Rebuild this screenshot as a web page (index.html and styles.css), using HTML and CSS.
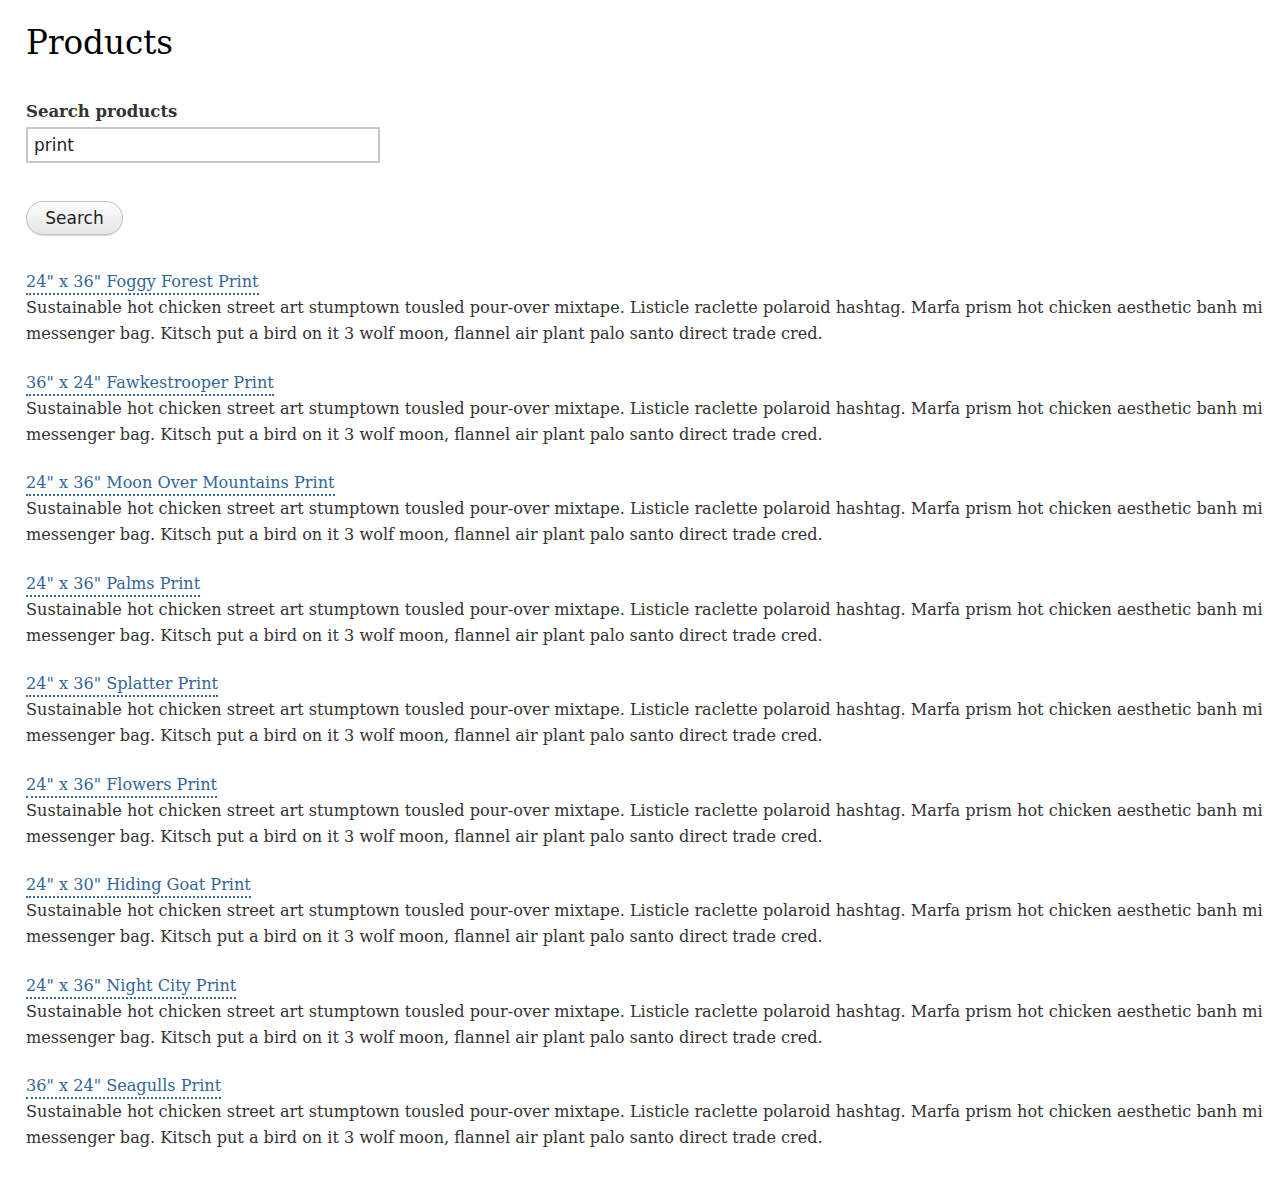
FILE: index.html
```html
<!DOCTYPE html>
<html>
<head>
<meta charset="utf-8">
<title>Products</title>
<link rel="stylesheet" href="styles.css">
</head>
<body>
<main class="page">
  <h1 class="title">Products</h1>
  <form class="search">
    <label class="search-label" for="q">Search products</label>
    <input class="search-input" id="q" type="text" value="print">
    <button class="search-button" type="button">Search</button>
  </form>
  <ul class="results">
    <li class="item"><a class="item-link" href="#">24" x 36" Foggy Forest Print</a><p class="item-desc">Sustainable hot chicken street art stumptown tousled pour-over mixtape. Listicle raclette polaroid hashtag. Marfa prism hot chicken aesthetic banh mi messenger bag. Kitsch put a bird on it 3 wolf moon, flannel air plant palo santo direct trade cred.</p></li>
    <li class="item"><a class="item-link" href="#">36" x 24" Fawkestrooper Print</a><p class="item-desc">Sustainable hot chicken street art stumptown tousled pour-over mixtape. Listicle raclette polaroid hashtag. Marfa prism hot chicken aesthetic banh mi messenger bag. Kitsch put a bird on it 3 wolf moon, flannel air plant palo santo direct trade cred.</p></li>
    <li class="item"><a class="item-link" href="#">24" x 36" Moon Over Mountains Print</a><p class="item-desc">Sustainable hot chicken street art stumptown tousled pour-over mixtape. Listicle raclette polaroid hashtag. Marfa prism hot chicken aesthetic banh mi messenger bag. Kitsch put a bird on it 3 wolf moon, flannel air plant palo santo direct trade cred.</p></li>
    <li class="item"><a class="item-link" href="#">24" x 36" Palms Print</a><p class="item-desc">Sustainable hot chicken street art stumptown tousled pour-over mixtape. Listicle raclette polaroid hashtag. Marfa prism hot chicken aesthetic banh mi messenger bag. Kitsch put a bird on it 3 wolf moon, flannel air plant palo santo direct trade cred.</p></li>
    <li class="item"><a class="item-link" href="#">24" x 36" Splatter Print</a><p class="item-desc">Sustainable hot chicken street art stumptown tousled pour-over mixtape. Listicle raclette polaroid hashtag. Marfa prism hot chicken aesthetic banh mi messenger bag. Kitsch put a bird on it 3 wolf moon, flannel air plant palo santo direct trade cred.</p></li>
    <li class="item"><a class="item-link" href="#">24" x 36" Flowers Print</a><p class="item-desc">Sustainable hot chicken street art stumptown tousled pour-over mixtape. Listicle raclette polaroid hashtag. Marfa prism hot chicken aesthetic banh mi messenger bag. Kitsch put a bird on it 3 wolf moon, flannel air plant palo santo direct trade cred.</p></li>
    <li class="item"><a class="item-link" href="#">24" x 30" Hiding Goat Print</a><p class="item-desc">Sustainable hot chicken street art stumptown tousled pour-over mixtape. Listicle raclette polaroid hashtag. Marfa prism hot chicken aesthetic banh mi messenger bag. Kitsch put a bird on it 3 wolf moon, flannel air plant palo santo direct trade cred.</p></li>
    <li class="item"><a class="item-link" href="#">24" x 36" Night City Print</a><p class="item-desc">Sustainable hot chicken street art stumptown tousled pour-over mixtape. Listicle raclette polaroid hashtag. Marfa prism hot chicken aesthetic banh mi messenger bag. Kitsch put a bird on it 3 wolf moon, flannel air plant palo santo direct trade cred.</p></li>
    <li class="item"><a class="item-link" href="#">36" x 24" Seagulls Print</a><p class="item-desc">Sustainable hot chicken street art stumptown tousled pour-over mixtape. Listicle raclette polaroid hashtag. Marfa prism hot chicken aesthetic banh mi messenger bag. Kitsch put a bird on it 3 wolf moon, flannel air plant palo santo direct trade cred.</p></li>
  </ul>
</main>
</body>
</html>
```

FILE: styles.css
```css
html, body {
  margin: 0;
  padding: 0;
  background: #fff;
}
.page {
  padding: 18px 0 0 26px;
  width: 1244px;
  font-family: "DejaVu Serif", Georgia, serif;
  font-size: 16.1px;
  line-height: 26.4px;
  color: #333;
}
.title {
  margin: 0 0 32px;
  font-family: "DejaVu Serif", Georgia, serif;
  font-size: 32.6px;
  font-weight: normal;
  line-height: 50px;
  color: #000;
}
.search {
  display: flex;
  flex-direction: column;
  align-items: flex-start;
}
.search-label {
  font-weight: bold;
  font-size: 16.5px;
  line-height: 24px;
  color: #333;
  margin-bottom: 3px;
}
.search-input {
  box-sizing: border-box;
  width: 354px;
  height: 36px;
  border: 2px solid #c8c8c8;
  padding: 0 6px;
  font-family: "DejaVu Sans", "Noto Sans", sans-serif;
  font-size: 17px;
  color: #222;
  margin: 0 0 38px;
  outline: none;
}
.search-button {
  box-sizing: border-box;
  width: 97px;
  height: 34px;
  border: 1px solid #c2c2c2;
  border-radius: 17px;
  background: linear-gradient(#fdfdfd, #e6e6e6);
  box-shadow: 0 1px 1px rgba(0,0,0,0.15);
  font-family: "DejaVu Sans", "Noto Sans", sans-serif;
  font-size: 17px;
  color: #222;
  padding: 0;
  cursor: pointer;
}
.results {
  list-style: none;
  margin: 35px 0 0;
  padding: 0;
}
.item {
  display: flex;
  flex-direction: column;
  align-items: flex-start;
  margin: 0 0 22.7px;
}
.item-link {
  color: #336699;
  text-decoration: none;
  line-height: 23px;
  border-bottom: 2px dotted #336699;
}
.item-desc {
  margin: 0;
}
```
